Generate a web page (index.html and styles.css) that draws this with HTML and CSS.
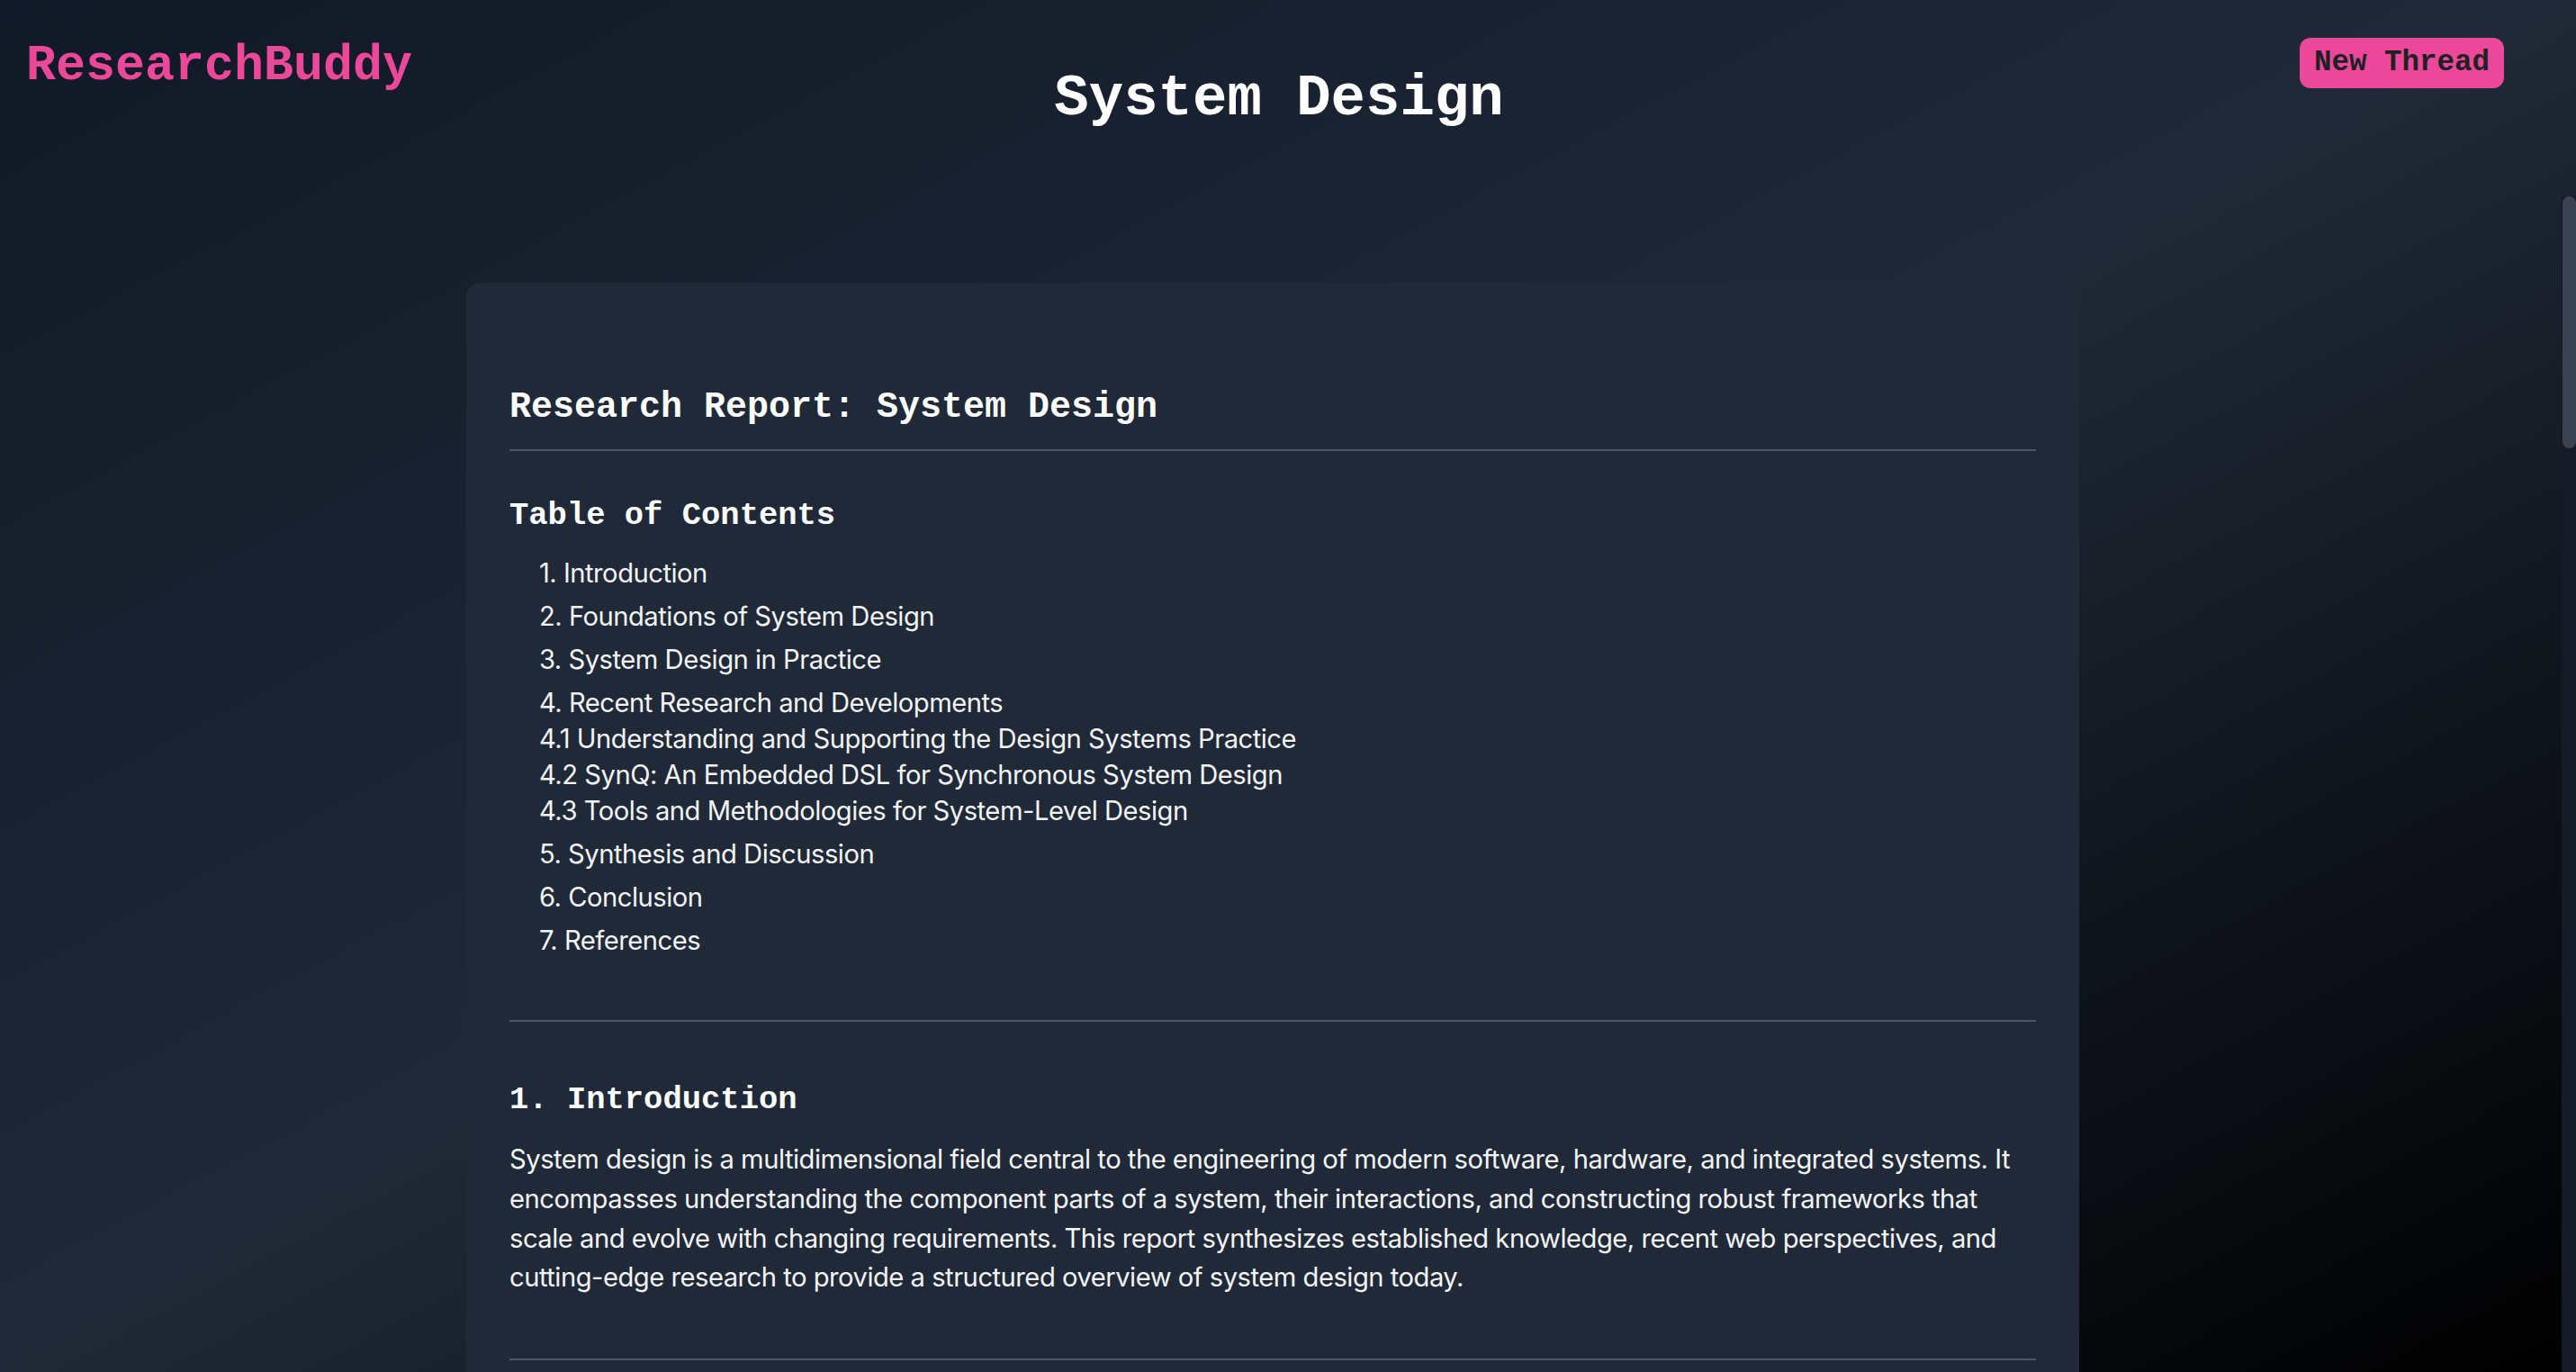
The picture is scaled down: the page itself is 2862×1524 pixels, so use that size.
FILE: index.html
```html
<!DOCTYPE html>
<html lang="en">
<head>
<meta charset="utf-8">
<title>ResearchBuddy - System Design</title>
<link rel="stylesheet" href="styles.css">
</head>
<body>
<div class="app">
  <header class="topbar">
    <div class="logo">ResearchBuddy</div>
    <h1 class="page-title">System Design</h1>
    <button class="new-thread">New Thread</button>
  </header>
  <div class="content">
    <main class="scroll-area">
      <article class="report">
        <h1 class="report-title">Research Report: System Design</h1>
        <h2 class="section-title">Table of Contents</h2>
        <ul class="toc">
          <li>1. Introduction</li>
          <li>2. Foundations of System Design</li>
          <li>3. System Design in Practice</li>
          <li>4. Recent Research and Developments
            <ul class="toc-sub">
              <li>4.1 Understanding and Supporting the Design Systems Practice</li>
              <li>4.2 SynQ: An Embedded DSL for Synchronous System Design</li>
              <li>4.3 Tools and Methodologies for System-Level Design</li>
            </ul>
          </li>
          <li>5. Synthesis and Discussion</li>
          <li>6. Conclusion</li>
          <li>7. References</li>
        </ul>
        <hr class="divider">
        <h2 class="section-title">1. Introduction</h2>
        <p class="body-text">System design is a multidimensional field central to the engineering of modern software, hardware, and integrated systems. It encompasses understanding the component parts of a system, their interactions, and constructing robust frameworks that scale and evolve with changing requirements. This report synthesizes established knowledge, recent web perspectives, and cutting-edge research to provide a structured overview of system design today.</p>
        <hr class="divider">
      </article>
    </main>
    <div class="scrollbar" aria-hidden="true"><div class="scrollbar-thumb"></div></div>
  </div>
</div>
</body>
</html>
```

FILE: styles.css
```css
* { box-sizing: border-box; }
html, body { margin: 0; height: 100%; }
body {
  background: linear-gradient(to bottom right, #111827, #1f2937, #000000);
  color: #f3f4f6;
  font-family: Inter, "Noto Sans", sans-serif;
  overflow: hidden;
}
.app {
  height: 100vh;
  display: flex;
  flex-direction: column;
}
.topbar {
  flex: 0 0 218px;
  display: grid;
  grid-template-columns: 1fr auto 1fr;
  align-items: start;
  padding: 37px 80px 0 29px;
}
.logo {
  justify-self: start;
  font-family: "Liberation Mono", monospace;
  font-weight: 700;
  font-size: 55px;
  line-height: 73px;
  color: #ec4899;
}
.page-title {
  margin: 33px 0 0;
  padding-left: 31px;
  font-family: "Liberation Mono", monospace;
  font-weight: 700;
  font-size: 64px;
  line-height: 80px;
  color: #ffffff;
}
.new-thread {
  justify-self: end;
  margin-top: 5px;
  height: 56px;
  padding: 4px 16px;
  border: 0;
  border-radius: 12px;
  background: #ec4899;
  color: #202124;
  font-family: "Liberation Mono", monospace;
  font-weight: 700;
  font-size: 32.5px;
  line-height: 48px;
}
.content {
  flex: 1 1 auto;
  min-height: 0;
  position: relative;
}
.scroll-area {
  height: 100%;
  overflow: hidden;
  padding: 96px 34px 60px 0;
  display: flex;
  flex-direction: column;
  align-items: center;
}
.scrollbar {
  position: absolute;
  top: 0;
  right: 0;
  bottom: 0;
  width: 16px;
  background: #141a26;
}
.scrollbar-thumb {
  margin-left: 1px;
  width: 15px;
  height: 280px;
  border-radius: 8px;
  background: #3b4251;
}
.report {
  width: 1792px;
  flex: 0 0 auto;
  background: #202938;
  border-radius: 15px;
  padding: 48px;
}
.report-title {
  margin: 66px 0 0;
  padding-bottom: 21px;
  border-bottom: 2px solid #4b5563;
  font-family: "Liberation Mono", monospace;
  font-weight: 700;
  font-size: 40px;
  line-height: 50px;
  color: #ffffff;
}
.section-title {
  margin: 49px 0 21px;
  font-family: "Liberation Mono", monospace;
  font-weight: 700;
  font-size: 35.5px;
  line-height: 46px;
  color: #ffffff;
}
.divider + .section-title { margin-top: 64px; }
.toc, .toc-sub {
  list-style: none;
  margin: 0;
  padding: 0;
}
.toc { padding-left: 33px; }
.toc > li {
  font-size: 29.2px;
  line-height: 40px;
  letter-spacing: -0.5px;
  margin-bottom: 8px;
}
.toc > li:last-child { margin-bottom: 0; }
.body-text {
  margin: 0;
  font-size: 29.2px;
  line-height: 43.8px;
  letter-spacing: -0.5px;
}
.divider {
  margin: 68px 0 0;
  border: 0;
  border-top: 2px solid #4b5563;
}
```
